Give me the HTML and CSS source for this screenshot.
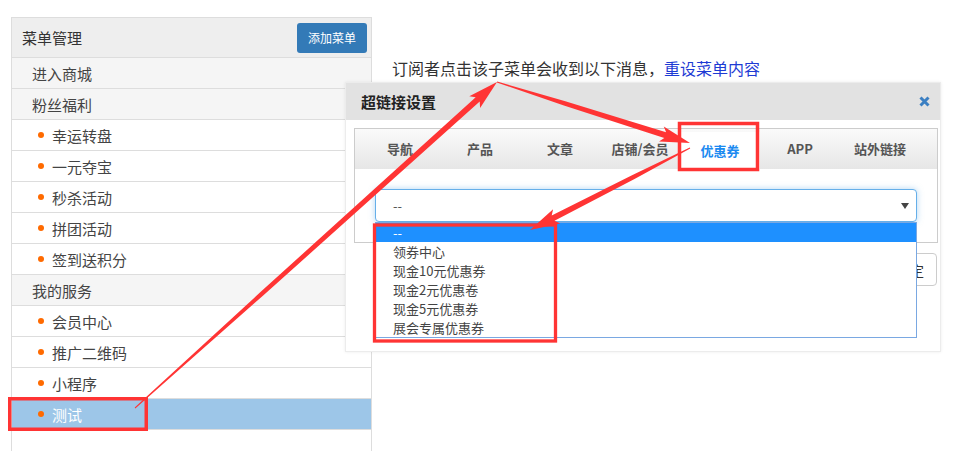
FILE: index.html
```html
<!DOCTYPE html>
<html lang="zh-CN">
<head>
    <meta charset="UTF-8">
    <title>菜单管理</title>
    <link rel="stylesheet" href="styles.css">
</head>
<body>
    <div class="page">
        <div class="menu-panel">
            <div class="menu-head">
                <span class="menu-title">菜单管理</span>
                <button class="btn-add">添加菜单</button>
            </div>
            <div class="menu-row group">进入商城</div>
            <div class="menu-row group">粉丝福利</div>
            <div class="menu-row child"><i class="dot"></i>幸运转盘</div>
            <div class="menu-row child"><i class="dot"></i>一元夺宝</div>
            <div class="menu-row child"><i class="dot"></i>秒杀活动</div>
            <div class="menu-row child"><i class="dot"></i>拼团活动</div>
            <div class="menu-row child"><i class="dot"></i>签到送积分</div>
            <div class="menu-row group">我的服务</div>
            <div class="menu-row child"><i class="dot"></i>会员中心</div>
            <div class="menu-row child"><i class="dot"></i>推广二维码</div>
            <div class="menu-row child"><i class="dot"></i>小程序</div>
            <div class="menu-row child active"><i class="dot"></i>测试</div>
        </div>
        <div class="main">
            <p class="tip">订阅者点击该子菜单会收到以下消息，<a href="#">重设菜单内容</a></p>
        </div>
    </div>

    <!-- link dialog -->
    <div class="modal">
        <div class="modal-head">
            超链接设置
            <svg class="close" width="11" height="11" viewBox="0 0 11 11"><path d="M1.5 1.5 L9.5 9.5 M9.5 1.5 L1.5 9.5" stroke="#3b7fc2" stroke-width="3"/></svg>
        </div>
        <div class="modal-body">
            <div class="tabs">
                <ul class="tab-bar">
                    <li>导航</li>
                    <li>产品</li>
                    <li>文章</li>
                    <li>店铺/会员</li>
                    <li class="on">优惠券</li>
                    <li>APP</li>
                    <li>站外链接</li>
                </ul>
                <div class="tab-pane">
                    <div class="select-wrap">
                        <div class="select">--
                            <svg class="caret" width="8" height="6" viewBox="0 0 8 6"><path d="M0 0 H8 L4 6 Z" fill="#444"/></svg>
                        </div>
                        <ul class="options">
                            <li class="hover">--</li>
                            <li>领券中心</li>
                            <li>现金10元优惠券</li>
                            <li>现金2元优惠卷</li>
                            <li>现金5元优惠券</li>
                            <li>展会专属优惠券</li>
                        </ul>
                    </div>
                </div>
            </div>
            <div class="modal-foot">
                <button class="btn">确定</button>
            </div>
        </div>
    </div>

    <!-- red notes drawn on top -->
    <svg class="marks" width="955" height="451" viewBox="0 0 955 451">
        <g fill="none" stroke="#ff3434">
            <rect x="9.75" y="398.75" width="136.5" height="30.5" stroke-width="3.5"/>
            <rect x="679.5" y="123.5" width="78" height="46" stroke-width="3.5"/>
            <rect x="374.5" y="225" width="181" height="116" stroke-width="3.3"/>
        </g>
        <g fill="#ff3434">
            <polygon points="135.3,408.4 263.2,295.5 479.7,101.6 480.1,108 497,82 469.3,96.2 475.7,97.2 260.2,292.3 134.7,407.6"/>
            <polygon points="496.8,82.5 563.9,105.5 664.3,138.1 659,141.6 690,143 663.8,126.4 666.1,132.3 565.3,101.3 497.2,81.5"/>
            <polygon points="689.8,147.6 633,174.7 551.7,215.4 553.1,209.2 530,230 560.3,223.4 554.5,220.8 635,178.7 690.2,148.4"/>
        </g>
    </svg>
</body>
</html>
```

FILE: styles.css
```css
body {
    margin: 0;
    font-family: "Noto Sans CJK SC", "Liberation Sans", sans-serif;
    color: #333;
    background: #fff;
}

.page {
    display: flex;
    height: 451px;
    padding: 17px 0 0 11px;
    box-sizing: border-box;
    overflow: hidden;
}

.menu-panel {
    width: 361px;
    flex-shrink: 0;
    border: 1px solid #ddd;
    border-bottom: 0;
    box-sizing: border-box;
    min-height: 450px;
}

.menu-head {
    display: flex;
    align-items: center;
    justify-content: space-between;
    height: 39px;
    padding: 0 4px 0 10px;
    background: #eee;
    border-bottom: 1px solid #ddd;
}
.menu-title {
    font-size: 15px;
    color: #333;
}
.btn-add {
    width: 70px;
    height: 30px;
    border: 0;
    border-radius: 3px;
    background: #337ab7;
    color: #fff;
    font-family: inherit;
    font-size: 12px;
    padding: 0;
}

.menu-row {
    display: flex;
    align-items: center;
    height: 30px;
    border-bottom: 1px solid #ddd;
    font-size: 15px;
    color: #444;
}
.menu-row.group {
    background: #f5f5f5;
    padding-left: 20px;
}
.menu-row.child {
    padding-left: 26px;
}
.menu-row.active {
    background: #9dc6e8;
    color: #fff;
}
.dot {
    width: 6px;
    height: 6px;
    border-radius: 50%;
    background: #ff6a00;
    margin-right: 8px;
}

.main {
    flex: 1;
    padding: 39px 0 0 20px;
}
.tip {
    margin: 0;
    font-size: 16px;
    line-height: 24px;
    color: #333;
}
.tip a {
    color: #1e3bd4;
    text-decoration: none;
}

/* dialog */
.modal {
    position: absolute;
    left: 345px;
    top: 82px;
    width: 596px;
    height: 270px;
    box-sizing: border-box;
    background: #fff;
    border: 1px solid #ececec;
    box-shadow: 0 0 3px rgba(0, 0, 0, 0.08);
}
.modal-head {
    position: relative;
    height: 37px;
    line-height: 37px;
    padding-left: 15px;
    background: #e2e2e2;
    font-size: 15px;
    font-weight: bold;
    color: #222;
}
.close {
    position: absolute;
    right: 10px;
    top: 13px;
}
.modal-body {
    padding: 8px 2px 0 8px;
}

.tabs {
    width: 584px;
    box-sizing: border-box;
    border: 1px solid #ccc;
}
.tab-bar {
    display: flex;
    margin: 0;
    padding: 0 0 0 5px;
    list-style: none;
    height: 40px;
    background: linear-gradient(#fafafa, #e6e6e6);
}
.tab-bar li {
    width: 80px;
    text-align: center;
    line-height: 40px;
    font-size: 13px;
    font-weight: bold;
    color: #555;
}
.tab-bar li.on {
    background: #fff;
    color: #1b8af0;
    margin-top: 3px;
    line-height: 37px;
}
.tab-pane {
    height: 73px;
    padding: 20px 0 0 20px;
    box-sizing: border-box;
}

.select-wrap {
    position: relative;
    width: 542px;
}
.select {
    position: relative;
    height: 33px;
    line-height: 31px;
    box-sizing: border-box;
    padding-left: 17px;
    border: 1px solid #66afe9;
    border-radius: 4px;
    box-shadow: 0 0 6px rgba(102, 175, 233, 0.5);
    font-size: 13px;
    color: #555;
    background: #fff;
}
.caret {
    position: absolute;
    right: 7px;
    top: 13px;
}
.options {
    position: absolute;
    left: 0;
    top: 33px;
    width: 542px;
    box-sizing: border-box;
    margin: 0;
    padding: 0;
    list-style: none;
    background: #fff;
    border: 1px solid #7aa8e2;
    z-index: 2;
}
.options li {
    height: 19px;
    line-height: 19px;
    padding-left: 17px;
    font-size: 13px;
    color: #444;
}
.options li.hover {
    background: #1e90ff;
    color: #fff;
}

.modal-foot {
    padding-top: 10px;
    text-align: right;
}
.btn {
    height: 33px;
    padding: 0 12px;
    margin-right: 1px;
    border: 1px solid #ccc;
    border-radius: 4px;
    background: #fff;
    font-family: inherit;
    font-size: 14px;
    color: #333;
}

.marks {
    position: absolute;
    left: 0;
    top: 0;
    pointer-events: none;
    z-index: 5;
}
```
